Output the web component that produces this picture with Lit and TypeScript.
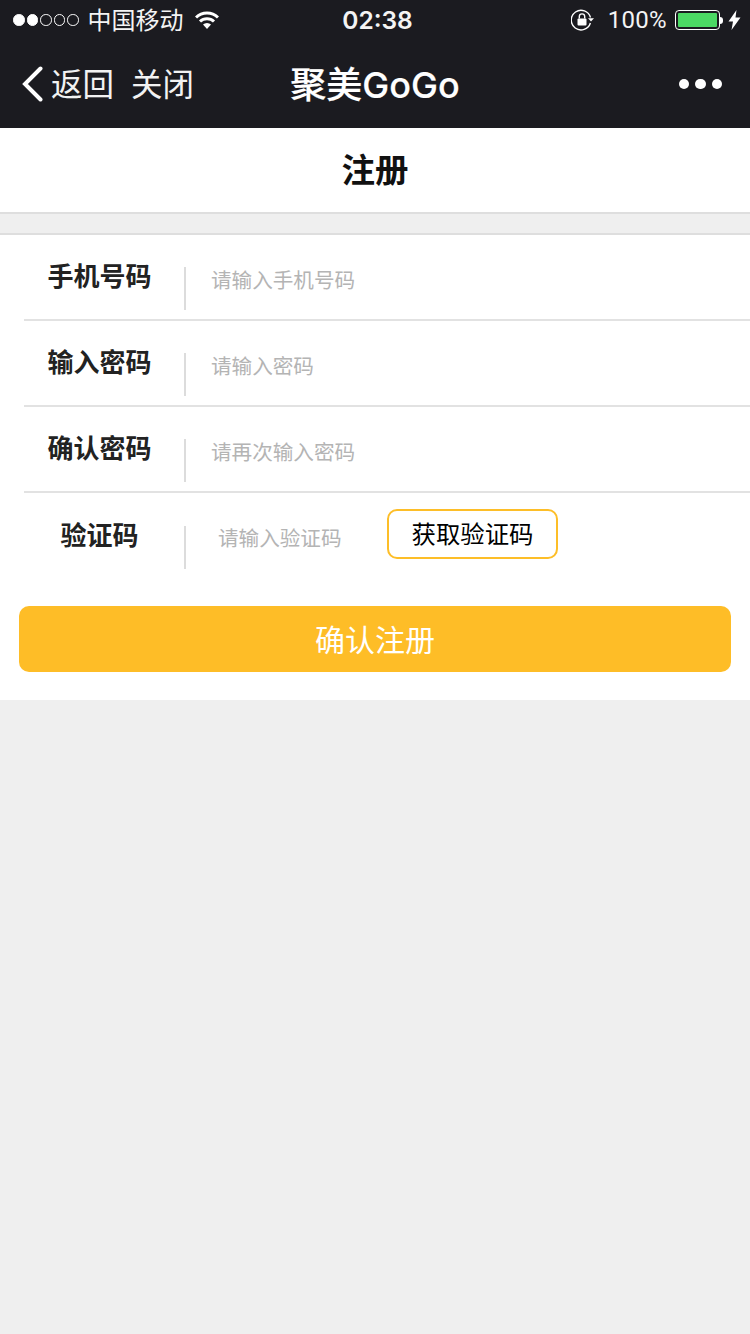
import { html, css, LitElement } from 'lit';
import { customElement } from 'lit/decorators.js';

@customElement('app-root')
export class AppRoot extends LitElement {
	static styles = css`
		:host {
			display: block;
			width: 750px;
			height: 1334px;
			background-color: #efefef;
			font-family: "Liberation Sans", "Noto Sans CJK SC", sans-serif;
			overflow: hidden;
		}
		header {
			height: 128px;
			background-color: #1b1b20;
			color: #fff;
		}
		.status {
			height: 40px;
			display: grid;
			grid-template-columns: 1fr auto 1fr;
			align-items: center;
			font-size: 24px;
			color: #f4f4f4;
		}
		.status-left, .status-right {
			display: flex;
			align-items: center;
		}
		.status-left { padding-left: 13px; }
		.status-right {
			justify-content: flex-end;
			padding-right: 9px;
		}
		.signal {
			display: flex;
			gap: 2px;
			margin-right: 9px;
		}
		.signal i {
			width: 9.5px;
			height: 9.5px;
			border: 1px solid #fff;
			border-radius: 50%;
		}
		.signal i.on { background-color: #fff; }
		.carrier {
			margin: 0 11px 4px 0;
		}
		.time {
			margin-left: 5px;
			font-family: Inter, sans-serif;
			font-size: 24.5px;
			font-weight: 600;
		}
		.pct {
			font-family: Roboto, sans-serif;
			font-size: 24px;
			letter-spacing: 0.3px;
			margin: 0 8px 0 13px;
		}
		.battery {
			width: 45px;
			height: 20px;
			box-sizing: border-box;
			padding: 2px;
			border: 1px solid #fff;
			border-radius: 4px;
		}
		.battery div {
			height: 100%;
			background-color: #4cd964;
			border-radius: 1px;
		}
		.nub {
			width: 3px;
			height: 7px;
			margin-right: 5px;
			background-color: #fff;
			border-radius: 0 3px 3px 0;
		}
		.nav {
			height: 88px;
			display: grid;
			grid-template-columns: 1fr auto 1fr;
			align-items: center;
		}
		.nav-left {
			display: flex;
			align-items: center;
			padding-left: 21px;
			font-size: 31.5px;
			color: #f2f2f2;
		}
		.nav-left svg { margin-right: 7px; }
		.nav-left span { margin-bottom: 4px; }
		.nav-left span + span { margin-left: 17px; }
		.nav-title {
			margin-bottom: 5px;
			font-family: Inter, "Noto Sans CJK SC", sans-serif;
			font-size: 36px;
			font-weight: 500;
			-webkit-text-stroke: 0.2px #fff;
		}
		.more {
			display: flex;
			justify-content: flex-end;
			gap: 6px;
			padding-right: 28px;
		}
		.more i {
			width: 10.5px;
			height: 10.5px;
			background-color: #fff;
			border-radius: 50%;
		}
		.title {
			height: 86px;
			display: flex;
			align-items: center;
			justify-content: center;
			box-sizing: border-box;
			padding-bottom: 5px;
			background-color: #fff;
			border-bottom: 2px solid #dedede;
			font-size: 33.5px;
			font-weight: 700;
			color: #111;
		}
		main {
			margin-top: 19px;
			height: 467px;
			box-sizing: border-box;
			background-color: #fff;
			border-top: 2px solid #dedede;
		}
		.row {
			height: 86px;
			box-sizing: border-box;
			margin-left: 24px;
			display: flex;
			align-items: flex-start;
			border-bottom: 2px solid #e2e2e2;
		}
		.row.last {
			border-bottom: none;
			height: 97px;
			padding-top: 1px;
		}
		label {
			flex: none;
			width: 151px;
			margin: 24px 9px 0 0;
			text-align: center;
			font-size: 26px;
			line-height: 36px;
			font-weight: 700;
			color: #222;
		}
		.sep {
			flex: none;
			width: 2px;
			height: 43px;
			margin-top: 32px;
			background-color: #dcdcdc;
		}
		input {
			flex: 1;
			min-width: 0;
			margin: 28px 0 0 25px;
			padding: 0;
			height: 36px;
			border: none;
			outline: none;
			background: transparent;
			font-family: inherit;
			font-size: 20.6px;
		}
		input::placeholder {
			color: #b4b4b4;
			opacity: 1;
		}
		.last input {
			flex: none;
			width: 128px;
			margin: 27px 0 0 32px;
		}
		.code {
			flex: none;
			width: 171px;
			height: 50px;
			box-sizing: border-box;
			margin: 15px 0 0 41px;
			padding: 0 0 3px;
			border: 2px solid #fdbe28;
			border-radius: 10px;
			background-color: #fff;
			font-family: inherit;
			font-size: 24.4px;
			color: #000;
		}
		.submit {
			display: block;
			width: 712px;
			height: 66px;
			margin: 16px 0 0 19px;
			padding: 0 0 2px;
			border: none;
			border-radius: 10px;
			background-color: #febd27;
			font-family: inherit;
			font-size: 30px;
			color: #fff;
		}
	`;

	renderRow(name: string, hint: string) {
		return html`
			<div class="row">
				<label>${name}</label>
				<div class="sep"></div>
				<input placeholder=${hint} />
			</div>
		`;
	}

	render() {
		return html`
			<header>
				<div class="status">
					<div class="status-left">
						<div class="signal">
							<i class="on"></i><i class="on"></i><i></i><i></i><i></i>
						</div>
						<span class="carrier">中国移动</span>
						<svg width="24" height="18" viewBox="0 0 24 18" fill="none" stroke="#fff" stroke-width="3">
							<path d="M1 6.5a15.5 15.5 0 0 1 22 0" />
							<path d="M5 10.5a10 10 0 0 1 14 0" />
							<path d="M12 18l-4-4.4a5.6 5.6 0 0 1 8 0z" fill="#fff" stroke="none" />
						</svg>
					</div>
					<div class="time">02:38</div>
					<div class="status-right">
						<svg width="24" height="22" viewBox="0 0 24 22" fill="none" stroke="#fff" stroke-width="1.4">
							<path d="M19.5 8.5A9.8 9.8 0 1 0 19.4 14" />
							<path d="M17 9.2h6l-3 3.2z" fill="#fff" stroke="none" />
							<rect x="6.5" y="9.5" width="9" height="7" rx="1" fill="#fff" stroke="none" />
							<path d="M8.3 9.5V7.6a2.7 2.7 0 0 1 5.4 0v1.9" />
						</svg>
						<span class="pct">100%</span>
						<div class="battery"><div></div></div>
						<div class="nub"></div>
						<svg width="13" height="20" viewBox="0 0 13 20" fill="#fff">
							<path d="M8.5 0L0.5 11.5h4.5L3.5 20l9-12.5H7.5z" />
						</svg>
					</div>
				</div>
				<div class="nav">
					<div class="nav-left">
						<svg width="23" height="36" viewBox="0 0 23 36" fill="none" stroke="#fff" stroke-width="4" stroke-linecap="round">
							<path d="M19.5 2.5L4 18l15.5 15.5" />
						</svg>
						<span>返回</span><span>关闭</span>
					</div>
					<div class="nav-title">聚美GoGo</div>
					<div class="more"><i></i><i></i><i></i></div>
				</div>
			</header>
			<div class="title">注册</div>
			<main>
				${this.renderRow('手机号码', '请输入手机号码')}
				${this.renderRow('输入密码', '请输入密码')}
				${this.renderRow('确认密码', '请再次输入密码')}
				<div class="row last">
					<label>验证码</label>
					<div class="sep"></div>
					<input placeholder="请输入验证码" />
					<button class="code">获取验证码</button>
				</div>
				<button class="submit">确认注册</button>
			</main>
		`;
	}
}
